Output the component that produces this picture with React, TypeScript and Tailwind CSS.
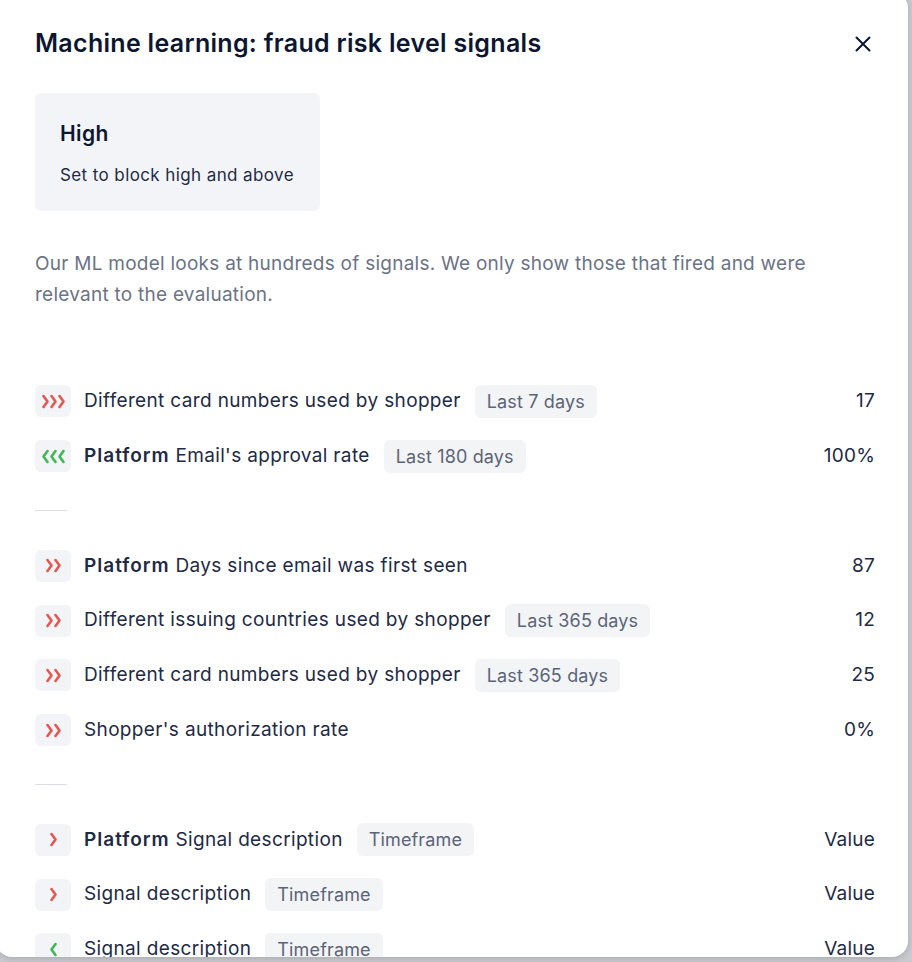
import React from 'react';

type Dir = 'up' | 'down';

interface Signal {
  dir: Dir;
  strength: number;
  platform?: boolean;
  label: string;
  timeframe?: string;
  value: string;
}

const groups: Signal[][] = [
  [
    { dir: 'up', strength: 3, label: 'Different card numbers used by shopper', timeframe: 'Last 7 days', value: '17' },
    { dir: 'down', strength: 3, platform: true, label: "Email's approval rate", timeframe: 'Last 180 days', value: '100%' },
  ],
  [
    { dir: 'up', strength: 2, platform: true, label: 'Days since email was first seen', value: '87' },
    { dir: 'up', strength: 2, label: 'Different issuing countries used by shopper', timeframe: 'Last 365 days', value: '12' },
    { dir: 'up', strength: 2, label: 'Different card numbers used by shopper', timeframe: 'Last 365 days', value: '25' },
    { dir: 'up', strength: 2, label: "Shopper's authorization rate", value: '0%' },
  ],
  [
    { dir: 'up', strength: 1, platform: true, label: 'Signal description', timeframe: 'Timeframe', value: 'Value' },
    { dir: 'up', strength: 1, label: 'Signal description', timeframe: 'Timeframe', value: 'Value' },
    { dir: 'down', strength: 1, label: 'Signal description', timeframe: 'Timeframe', value: 'Value' },
  ],
];

// chevrons inside the strength badge: red pointing right, green pointing left
function Chevrons({ dir, count }: { dir: Dir; count: number }) {
  const w = 7 + (count - 1) * 8;
  const color = dir === 'up' ? '#e5584f' : '#3fb953';
  return (
    <svg width={w} height="15" viewBox={`0 0 ${w} 15`} fill="none">
      {Array.from({ length: count }).map((_, i) => {
        const x = i * 8;
        const d = dir === 'up' ? `M${x + 1.5} 2 L${x + 5.5} 7.5 L${x + 1.5} 13` : `M${x + 5.5} 2 L${x + 1.5} 7.5 L${x + 5.5} 13`;
        return <path key={i} d={d} stroke={color} strokeWidth="2.6" strokeLinecap="round" strokeLinejoin="round" />;
      })}
    </svg>
  );
}

function SignalRow({ signal }: { signal: Signal }) {
  return (
    <div className="flex h-[54.8px] items-center">
      <div className="flex h-8 w-9 shrink-0 items-center justify-center rounded-md bg-[#f3f4f8]">
        <Chevrons dir={signal.dir} count={signal.strength} />
      </div>
      <div className="ml-[13px] whitespace-nowrap text-[19px] tracking-[0.35px] text-[#1e2a46]">
        {signal.platform && <span className="font-semibold tracking-[1px]">Platform </span>}
        {signal.label}
      </div>
      {signal.timeframe && (
        <div className="ml-[14px] flex h-[33px] items-center whitespace-nowrap rounded-md bg-[#f3f4f6] px-3 text-[18px] tracking-[0.15px] text-[#5b6478]">
          {signal.timeframe}
        </div>
      )}
      <div className="ml-auto text-[19px] tracking-[0.2px] text-[#1e2a46]">{signal.value}</div>
    </div>
  );
}

export default function App() {
  return (
    <div className="h-[962px] w-[912px] overflow-hidden bg-[#c9cacf]" style={{ fontFamily: 'Inter, sans-serif' }}>
      <div className="-ml-1 -mt-2 h-[965px] w-[912px] overflow-hidden rounded-2xl bg-white pl-[39px] pr-[33px] pt-[36px] shadow-[0_2px_6px_rgba(0,0,0,0.15)]">
        {/* Header */}
        <div className="flex h-8 items-center justify-between">
          <h1 className="text-[25px] font-semibold tracking-[0.3px] text-[#0c1632]">
            Machine learning: fraud risk level signals
          </h1>
          <svg width="16" height="16" viewBox="0 0 16 16" className="mr-[4px]">
            <path d="M1.5 1.5 L14.5 14.5 M14.5 1.5 L1.5 14.5" stroke="#0c1632" strokeWidth="2" strokeLinecap="round" />
          </svg>
        </div>

        {/* Risk level card */}
        <div className="mt-[33px] h-[118px] w-[285px] rounded-md bg-[#f3f4f8] px-[25px] pt-[27px]">
          <div className="text-[21px] font-semibold leading-7 tracking-[0.4px] text-[#0c1632]">High</div>
          <div className="mt-[15px] whitespace-nowrap text-[17px] leading-6 tracking-[0.4px] text-[#1e2a46]">
            Set to block high and above
          </div>
        </div>

        <p className="mt-[37px] text-[19px] leading-[31px] tracking-[0.25px] text-[#6b7386]">
          Our ML model looks at hundreds of signals. We only show those that fired and were relevant to the evaluation.
        </p>

        {/* Signals */}
        <div className="mt-[64px]">
          {groups.map((group, gi) => (
            <div key={gi}>
              {gi > 0 && (
                <div className="flex h-[54.8px] items-center">
                  <div className="h-px w-8 bg-[#dcdee3]" />
                </div>
              )}
              {group.map((s, i) => (
                <SignalRow key={i} signal={s} />
              ))}
            </div>
          ))}
        </div>
      </div>
    </div>
  );
}
